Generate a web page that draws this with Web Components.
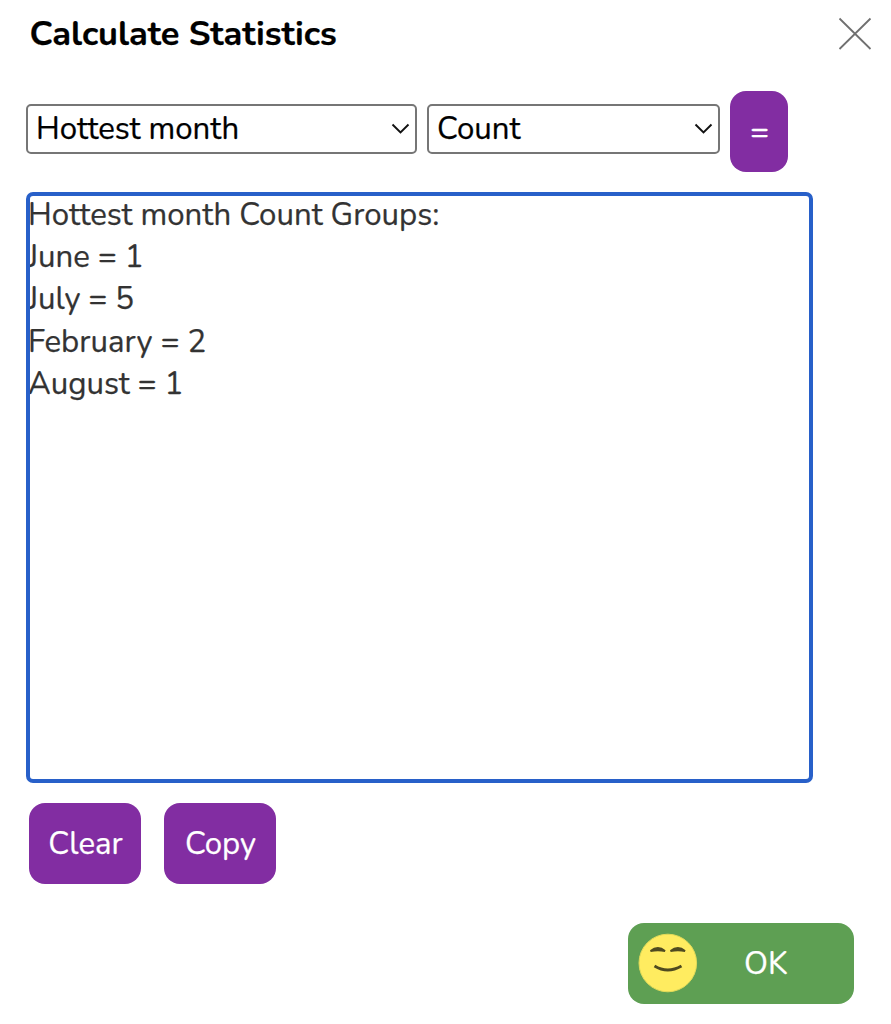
<!DOCTYPE html>
<html lang="en">
<head>
<meta charset="utf-8">
<title>Calculate Statistics</title>
<style>
    body {
        margin: 0;
        background: #fff;
        font-family: Nunito, Lato, "Open Sans", sans-serif;
        font-size: 31.2px;
        -webkit-text-stroke: 0.25px;
    }
</style>
</head>
<body>
<stats-dialog dialog-title="Calculate Statistics">
    <select-box slot="controls" style="width: 391px">Hottest month</select-box>
    <select-box slot="controls" style="width: 293px; margin-left: 10px">Count</select-box>
    <push-button slot="controls" style="width: 58px; margin-left: 10px; margin-top: -13px">=</push-button>
    <result-line slot="results">Hottest month Count Groups:</result-line>
    <result-line slot="results">June = 1</result-line>
    <result-line slot="results">July = 5</result-line>
    <result-line slot="results">February = 2</result-line>
    <result-line slot="results">August = 1</result-line>
    <push-button slot="actions" style="width: 112px">Clear</push-button>
    <push-button slot="actions" style="width: 112px">Copy</push-button>
    <ok-button slot="footer">OK</ok-button>
</stats-dialog>

<script>
class StatsDialog extends HTMLElement {

    connectedCallback() {
        this.attachShadow({ mode: 'open' });
        this.shadowRoot.innerHTML = `
            <style>
                :host {
                    display: flex;
                    flex-direction: column;
                    box-sizing: border-box;
                    height: 1024px;
                }
                .header {
                    display: flex;
                    justify-content: space-between;
                    height: 104px;
                    box-sizing: border-box;
                    padding: 12px 19px 0 29.5px;
                }
                h1 {
                    margin: 0;
                    font-size: 34.4px;
                    line-height: 43px;
                    font-weight: 700;
                    color: #000;
                }
                .close {
                    margin-top: 5px;
                    width: 34px;
                    height: 34px;
                }
                .controls {
                    display: flex;
                    align-items: flex-start;
                    height: 88px;
                    padding-left: 26px;
                }
                .results {
                    box-sizing: border-box;
                    width: 787px;
                    height: 591px;
                    margin-left: 25.5px;
                    border: 4px solid #2860c9;
                    border-radius: 7px;
                    overflow: hidden;
                    color: #333;
                }
                .lines {
                    margin-top: -2px;
                }
                .actions {
                    display: flex;
                    gap: 23px;
                    padding: 20px 0 0 29px;
                }
                .footer {
                    display: flex;
                    justify-content: flex-end;
                    padding: 39px 37px 0 0;
                }
            </style>
            <div class="header">
                <h1></h1>
                <svg class="close" viewBox="0 0 34 34"><path d="M1.5 1.5L32.5 32M32.5 1.5L1.5 32" stroke="#707070" stroke-width="1.8" fill="none"/></svg>
            </div>
            <div class="controls"><slot name="controls"></slot></div>
            <div class="results"><div class="lines"><slot name="results"></slot></div></div>
            <div class="actions"><slot name="actions"></slot></div>
            <div class="footer"><slot name="footer"></slot></div>
        `;
        this.shadowRoot.querySelector('h1').textContent = this.getAttribute('dialog-title');
    }

}

class SelectBox extends HTMLElement {

    connectedCallback() {
        this.attachShadow({ mode: 'open' });
        this.shadowRoot.innerHTML = `
            <style>
                :host {
                    display: flex;
                    align-items: center;
                    justify-content: space-between;
                    box-sizing: border-box;
                    height: 50px;
                    padding: 0 5px 0 8px;
                    border: 2px solid #767676;
                    border-radius: 5px;
                    background: #fff;
                    color: #000;
                }
                span {
                    padding-bottom: 2px;
                }
                svg {
                    width: 19px;
                    height: 12px;
                }
            </style>
            <span><slot></slot></span>
            <svg viewBox="0 0 19 12"><path d="M1.5 1.5L9.5 9.5L17.5 1.5" fill="none" stroke="#111" stroke-width="1.9"/></svg>
        `;
    }

}

class ResultLine extends HTMLElement {

    connectedCallback() {
        this.attachShadow({ mode: 'open' });
        this.shadowRoot.innerHTML = `
            <style>
                :host {
                    display: block;
                    margin-left: -1.5px;
                    line-height: 42.2px;
                    white-space: nowrap;
                }
            </style>
            <slot></slot>
        `;
    }

}

class PushButton extends HTMLElement {

    connectedCallback() {
        this.attachShadow({ mode: 'open' });
        this.shadowRoot.innerHTML = `
            <style>
                :host {
                    display: flex;
                    align-items: center;
                    justify-content: center;
                    box-sizing: border-box;
                    height: 81px;
                    padding: 0 0 1px 1px;
                    border-radius: 16px;
                    background: #822da2;
                    color: #fff;
                    cursor: pointer;
                }
            </style>
            <slot></slot>
        `;
    }

}

class OkButton extends HTMLElement {

    connectedCallback() {
        this.attachShadow({ mode: 'open' });
        this.shadowRoot.innerHTML = `
            <style>
                :host {
                    display: flex;
                    align-items: center;
                    box-sizing: border-box;
                    width: 226px;
                    height: 81px;
                    padding: 0 0 1px 10px;
                    border-radius: 16px;
                    background: #5e9f53;
                    color: #fff;
                    cursor: pointer;
                }
                svg {
                    width: 60px;
                    height: 60px;
                    margin-top: -1px;
                }
                span {
                    margin-left: 46px;
                }
            </style>
            <svg viewBox="0 0 60 60">
                <circle cx="29.8" cy="30" r="28.8" fill="#ffec60" stroke="#e2db59" stroke-width="1"/>
                <path d="M12.5 18Q20 12 27 18Q20 16.5 12.5 18ZM32.5 18Q40 12 47 18Q40 16.5 32.5 18Z" fill="#4f4b20" stroke="#4f4b20" stroke-width="1.8"/>
                <path d="M16.5 33Q29.5 41 43.5 33" fill="none" stroke="#4f4b20" stroke-width="2.8"/>
            </svg>
            <span><slot></slot></span>
        `;
    }

}

customElements.define('stats-dialog', StatsDialog);
customElements.define('select-box', SelectBox);
customElements.define('result-line', ResultLine);
customElements.define('push-button', PushButton);
customElements.define('ok-button', OkButton);
</script>
</body>
</html>
